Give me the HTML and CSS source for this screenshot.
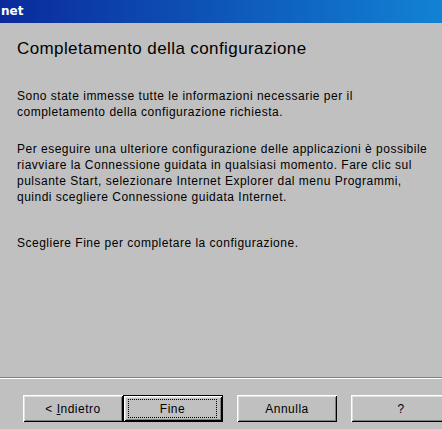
FILE: index.html
```html
<!DOCTYPE html>
<html lang="it">
<head>
<meta charset="utf-8">
<title>Connessione guidata Internet</title>
<link rel="stylesheet" href="styles.css">
</head>
<body>
<div class="window">
  <div class="titlebar">net</div>
  <div class="content">
    <h1 class="heading">Completamento della configurazione</h1>
    <p class="para p1">Sono state immesse tutte le informazioni necessarie per il<br>completamento della configurazione richiesta.</p>
    <p class="para p2">Per eseguire una ulteriore configurazione delle applicazioni è possibile<br>riavviare la Connessione guidata in qualsiasi momento. Fare clic sul<br>pulsante Start, selezionare Internet Explorer dal menu Programmi,<br>quindi scegliere Connessione guidata Internet.</p>
    <p class="para p3">Scegliere Fine per completare la configurazione.</p>
  </div>
  <div class="footer">
    <div class="separator"></div>
    <div class="buttons">
      <button class="btn"><span class="label">&lt; <u>I</u>ndietro</span></button>
      <button class="btn default"><span class="focus">Fine</span></button>
      <button class="btn gap"><span class="label">Annulla</span></button>
      <button class="btn gap"><span class="label">?</span></button>
    </div>
  </div>
</div>
</body>
</html>
```

FILE: styles.css
```css
html, body {
  margin: 0;
  padding: 0;
  background: #c0c0c0;
  overflow: hidden;
}
.window {
  width: 442px;
  height: 429px;
  background: #c0c0c0;
  display: flex;
  flex-direction: column;
  font-family: "Liberation Sans", Arial, sans-serif;
  color: #000;
}
.titlebar {
  height: 23px;
  line-height: 23px;
  padding-left: 1px;
  font-family: "DejaVu Sans", Verdana, sans-serif;
  font-weight: bold;
  font-size: 12px;
  color: #fff;
  background: linear-gradient(to right, #0a2a9c, #1282d4);
}
.content {
  flex: 1;
  padding: 0 17px;
}
.heading {
  margin: 16px 0 0 0;
  font-size: 17px;
  line-height: 20px;
  letter-spacing: 0.4px;
  font-weight: normal;
}
.para {
  margin: 0;
  font-size: 12px;
  line-height: 16px;
  letter-spacing: 0.5px;
  white-space: nowrap;
}
.p1 { margin-top: 29px; }
.p2 { margin-top: 21px; }
.p3 { margin-top: 30px; }
.footer {
  height: 52px;
  display: flex;
  flex-direction: column;
}
.separator {
  height: 1px;
  background: #808080;
  border-bottom: 1px solid #fff;
}
.buttons {
  display: flex;
  padding: 16px 0 0 23px;
}
.btn {
  box-sizing: border-box;
  width: 100px;
  height: 27px;
  flex: none;
  margin: 0;
  padding: 0;
  background: #c0c0c0;
  border: none;
  border-radius: 0;
  box-shadow: inset 1px 1px #fff, inset -1px -1px #000, inset 2px 2px #dfdfdf, inset -2px -2px #808080;
  font-family: "Liberation Sans", Arial, sans-serif;
  font-size: 12px;
  letter-spacing: 0.5px;
  color: #000;
  display: flex;
  align-items: center;
  justify-content: center;
}
.label {
  white-space: pre;
}
.btn u {
  text-decoration: underline;
  text-underline-offset: 1px;
}
.btn.gap { margin-left: 14px; }
.btn.default {
  border: 1px solid #000;
  padding: 3px 5px 3px 4px;
  align-items: stretch;
}
.focus {
  flex: 1;
  border: 1px dotted #000;
  display: flex;
  align-items: center;
  justify-content: center;
}
```
